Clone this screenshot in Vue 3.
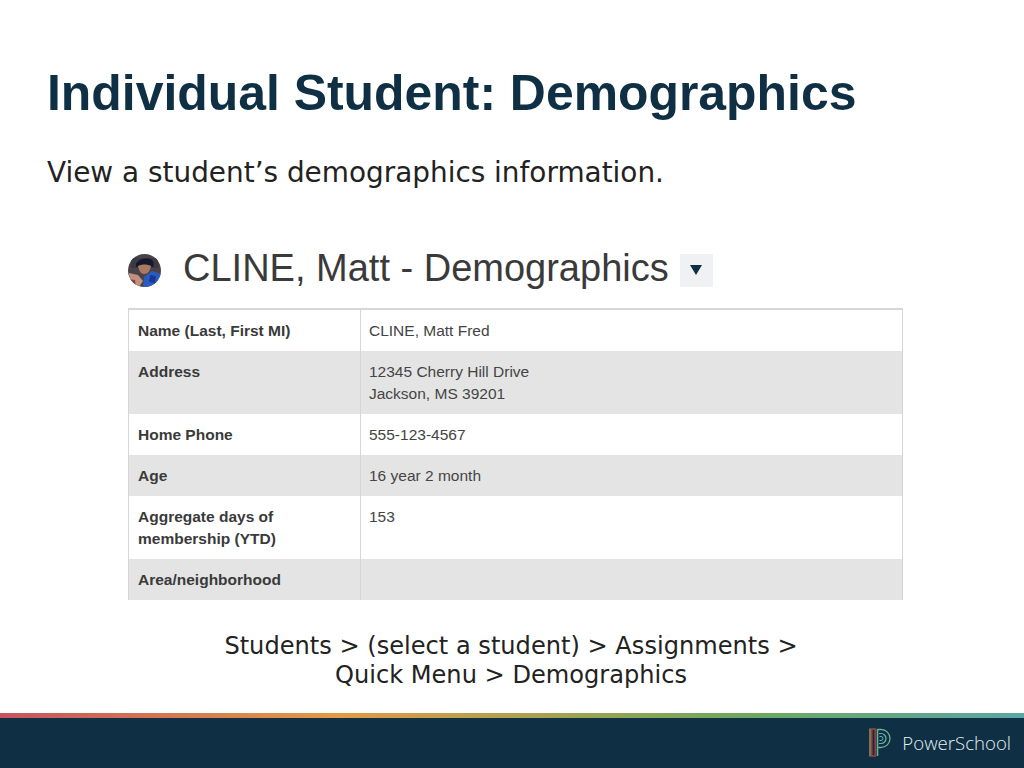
<script setup>
const rows = [
  { label: ["Name (Last, First MI)"], value: ["CLINE, Matt Fred"] },
  { label: ["Address"], value: ["12345 Cherry Hill Drive", "Jackson, MS 39201"] },
  { label: ["Home Phone"], value: ["555-123-4567"] },
  { label: ["Age"], value: ["16 year 2 month"] },
  { label: ["Aggregate days of", "membership (YTD)"], value: ["153"] },
  { label: ["Area/neighborhood"], value: [] },
];
</script>

<template>
  <div class="slide">
    <main class="content">
      <h1 class="title">Individual Student: Demographics</h1>
      <p class="lead">View a student’s demographics information.</p>

      <div class="shot">
        <div class="shot-head">
          <svg class="avatar" width="33" height="33" viewBox="0 0 33 33">
            <defs>
              <clipPath id="avatar-clip"><circle cx="16.5" cy="16.5" r="16.5" /></clipPath>
            </defs>
            <g clip-path="url(#avatar-clip)">
              <rect width="33" height="33" fill="#4a4248" />
              <path d="M3 4h27v10H3z" fill="#3a3a42" />
              <path d="M8 10c2-5 11-7 16-4 2 2 2 5 1 7-5-2-11-2-17 0z" fill="#15182a" />
              <path d="M10 12c4-2 9-2 13 0-1 5-3 8-7 8-3 0-5-3-6-8z" fill="#a97a62" />
              <path d="M15 33l1-10 8-6 9 3v13z" fill="#2a5cc0" />
              <path d="M22 21l6 1-1 7-6-1z" fill="#173a90" />
              <path d="M1 19l9 2 5 6-4 6H2z" fill="#c2907e" />
              <path d="M0 25l7 1 1 7H0z" fill="#7a454e" />
            </g>
          </svg>
          <h2 class="shot-title">CLINE, Matt - Demographics</h2>
          <span class="caret-btn"><span class="caret"></span></span>
        </div>

        <div class="table">
          <div v-for="(row, i) in rows" :key="i" class="row" :class="{ alt: i % 2 === 1 }">
            <div class="cell label">
              <div v-for="line in row.label" :key="line">{{ line }}</div>
            </div>
            <div class="cell value">
              <div v-for="line in row.value" :key="line">{{ line }}</div>
            </div>
          </div>
        </div>
      </div>

      <p class="path">
        Students &gt; (select a student) &gt; Assignments &gt;<br />
        Quick Menu &gt; Demographics
      </p>
    </main>

    <footer class="footer">
      <div class="stripe"></div>
      <div class="bar">
        <svg class="logo" width="22" height="30" viewBox="0 0 22 30" fill="none">
          <path d="M1 0.5v28" stroke="#c9a15a" stroke-width="1.2" />
          <path d="M2.8 1h3.4v27h-3.4z" stroke="#a8423c" stroke-width="1.4" />
          <path d="M8.5 1v27" stroke="#6fb08c" stroke-width="1.6" />
          <path d="M8.5 1.5h3.5a9 9 0 0 1 0 18h-3.5" stroke="#6fb08c" stroke-width="1.3" />
          <path d="M10 5.5h2a5 5 0 0 1 0 10h-2" stroke="#6bb3ad" stroke-width="1.2" />
          <path d="M10.5 8.5h1.5a2 2 0 0 1 0 4h-1.5" stroke="#6bb3ad" stroke-width="1" />
        </svg>
        <span class="brand">PowerSchool</span>
      </div>
    </footer>
  </div>
</template>

<style scoped>
.slide {
  width: 1024px; height: 768px; background: #fff;
  display: flex; flex-direction: column; overflow: hidden;
}
.content { flex: 1; padding: 65px 0 0 47px; min-height: 0; }
.title {
  margin: 0; font: 700 49.9px/56px "Liberation Sans", Arial, sans-serif;
  color: #0e2f44; white-space: nowrap;
}
.lead {
  margin: 36px 0 0; font: 27.9px/32px "DejaVu Sans", Verdana, sans-serif;
  color: #222; white-space: nowrap;
}
.shot { width: 775px; margin: 57px 0 0 81px; font-family: "Liberation Sans", Arial, sans-serif; }
.shot-head { display: flex; align-items: center; height: 44px; }
.avatar { flex: none; margin-top: 4px; }
.shot-title {
  margin: 0 0 0 22px; font-size: 38px; font-weight: 400; color: #3a3a3a;
  white-space: nowrap; line-height: 44px;
}
.caret-btn {
  width: 33px; height: 33px; margin: 4px 0 0 11px; background: #f0f1f2;
  display: flex; align-items: center; justify-content: center;
}
.caret {
  width: 0; height: 0; border-left: 6px solid transparent; border-right: 6px solid transparent;
  border-top: 10px solid #0e2f44;
}
.table { margin-top: 18px; border: 1px solid #d6d6d6; border-top-width: 2px; border-bottom: 0; }
.row { display: grid; grid-template-columns: 232px 1fr; background: #fff; }
.row.alt { background: #e4e4e4; }
.cell { padding: 10px 9px 9px 9px; font-size: 15.5px; line-height: 22px; color: #444; min-height: 41px; box-sizing: border-box; }
.label { font-weight: 700; color: #3a3a3a; border-right: 1px solid #d6d6d6; }
.value { padding-left: 8px; }
.path {
  margin: 32px 0 0; width: 928px; text-align: center;
  font: 24.1px/29px "DejaVu Sans", Verdana, sans-serif; color: #222;
}
.footer { flex: none; }
.stripe {
  height: 5px;
  background: linear-gradient(90deg, #c8535f 0%, #e39a45 33%, #6ea85c 72%, #5ba6a6 100%);
}
.bar {
  height: 50px; background: #0e2f44; display: flex; align-items: center;
  justify-content: flex-end; padding-right: 13px; gap: 11px;
}
.logo { flex: none; }
.brand { font: 300 18.6px/24px "Open Sans", "Liberation Sans", sans-serif; color: #e6eef0; }
</style>
